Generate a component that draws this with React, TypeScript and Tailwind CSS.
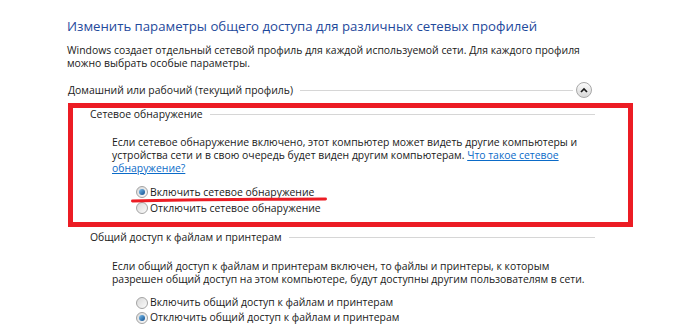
import React from 'react';

function Radio({ checked }: { checked: boolean }) {
  return (
    <span className="w-[12px] h-[12px] rounded-full border border-[#a3a3a3] bg-gradient-to-br from-[#d9d9d9] to-[#fbfbfb] flex items-center justify-center shrink-0">
      {checked && (
        <span className="w-[6px] h-[6px] rounded-full bg-gradient-to-br from-[#7cc0ee] to-[#0a4e8e]" />
      )}
    </span>
  );
}

function SectionHeader({ title }: { title: string }) {
  return (
    <div className="flex items-center gap-[7px] h-[13px]">
      <span className="whitespace-nowrap">{title}</span>
      <span className="flex-1 h-px bg-[#d6d6d6]" />
    </div>
  );
}

function ChevronButton() {
  return (
    <span className="w-[16px] h-[16px] rounded-full border border-[#a8a8a8] bg-gradient-to-b from-[#fbfbfb] to-[#d8d8d8] flex items-center justify-center shrink-0">
      <svg width="8" height="6" viewBox="0 0 8 6">
        <path d="M1 5 L4 2 L7 5" fill="none" stroke="#1a1a1a" strokeWidth="1.7" />
      </svg>
    </span>
  );
}

export default function App() {
  return (
    <div
      className="w-[700px] h-[333px] bg-white overflow-hidden text-[#1a1a1a] text-[10.4px] leading-[13px] pl-[67px] pt-[16px] whitespace-nowrap"
      style={{ fontFamily: '"Open Sans", "Noto Sans", sans-serif' }}
    >
      <h1 className="text-[13.2px] leading-[20px] text-[#1f4a9c]">
        Изменить параметры общего доступа для различных сетевых профилей
      </h1>
      <p className="mt-[8px]">
        Windows создает отдельный сетевой профиль для каждой используемой сети. Для каждого профиля
        <br />
        можно выбрать особые параметры.
      </p>

      <div className="mt-[12px] w-[525px] h-[16px] flex items-center gap-[3px] pl-[1px]">
        <div className="flex-1">
          <SectionHeader title="Домашний или рабочий (текущий профиль)" />
        </div>
        <ChevronButton />
      </div>

      <div className="mt-[5px] ml-[1px] w-[565px] h-[124px] border-[5px] border-[#ec1c24] pl-[17px] pr-[33px]">
        <SectionHeader title="Сетевое обнаружение" />
        <div className="pl-[22px] mt-[15px]">
          <p>
            Если сетевое обнаружение включено, этот компьютер может видеть другие компьютеры и
            <br />
            устройства сети и в свою очередь будет виден другим компьютерам.{' '}
            <a className="text-[#0b6bc8] underline">
              Что такое сетевое
              <br />
              обнаружение?
            </a>
          </p>
          <div className="relative mt-[9px] pl-[24px] flex flex-col">
            <label className="flex items-center gap-[2px] h-[16px]">
              <Radio checked />
              <span>Включить сетевое обнаружение</span>
            </label>
            <label className="flex items-center gap-[2px] h-[16px]">
              <Radio checked={false} />
              <span>Отключить сетевое обнаружение</span>
            </label>
            <svg className="absolute left-[19px] top-[13px]" width="196" height="6" viewBox="0 0 196 6">
              <path d="M1.5 4 Q 60 2.5 194.5 2" fill="none" stroke="#ec1c24" strokeWidth="3" strokeLinecap="round" />
            </svg>
          </div>
        </div>
      </div>

      <div className="mt-[4px] pl-[23px] w-[528px]">
        <SectionHeader title="Общий доступ к файлам и принтерам" />
        <div className="pl-[22px] mt-[16px]">
          <p>
            Если общий доступ к файлам и принтерам включен, то файлы и принтеры, к которым
            <br />
            разрешен общий доступ на этом компьютере, будут доступны другим пользователям в сети.
          </p>
          <div className="mt-[9px] pl-[24px] flex flex-col">
            <label className="flex items-center gap-[2px] h-[15px]">
              <Radio checked={false} />
              <span>Включить общий доступ к файлам и принтерам</span>
            </label>
            <label className="flex items-center gap-[2px] h-[15px]">
              <Radio checked />
              <span>Отключить общий доступ к файлам и принтерам</span>
            </label>
          </div>
        </div>
      </div>
    </div>
  );
}
